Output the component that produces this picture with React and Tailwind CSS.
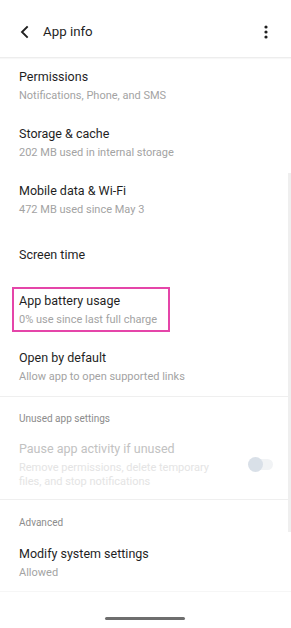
import React from "react";

function Row({ title, sub }) {
  return (
    <div className="px-[19px] pt-[10px] pb-[9px]">
      <div className="text-[12.5px] leading-[18px] text-[#1f1f1f]">{title}</div>
      <div className="text-[11px] leading-[20px] text-[#a3a3a3]">{sub}</div>
    </div>
  );
}

export default function App() {
  return (
    <div
      className="relative w-[291px] h-[628px] bg-white overflow-hidden"
      style={{ fontFamily: "Roboto, 'Noto Sans', sans-serif" }}
    >
      {/* Header */}
      <div className="h-[58px] pt-[7px] flex items-center border-b border-[#ededed] shadow-[0_1px_1px_rgba(0,0,0,0.03)]">
        <div className="w-[43px] flex justify-center pl-[6px]">
          <svg width="14" height="14" viewBox="0 0 14 14">
            <path d="M9 2 L4 7 L9 12" fill="none" stroke="#202020" strokeWidth="1.9" strokeLinecap="square" />
          </svg>
        </div>
        <div className="flex-1 text-[13.3px] text-[#1f1f1f]">App info</div>
        <div className="w-[50px] flex justify-center pr-[1px]">
          <svg width="4" height="14" viewBox="0 0 4 14">
            <circle cx="2" cy="2" r="1.6" fill="#202020" />
            <circle cx="2" cy="7" r="1.6" fill="#202020" />
            <circle cx="2" cy="12" r="1.6" fill="#202020" />
          </svg>
        </div>
      </div>

      <Row title="Permissions" sub="Notifications, Phone, and SMS" />
      <Row title="Storage & cache" sub="202 MB used in internal storage" />
      <Row title="Mobile data & Wi‑Fi" sub="472 MB used since May 3" />
      <div className="h-[53px] flex items-center px-[19px] text-[12.5px] text-[#1f1f1f]">Screen time</div>
      <div className="relative">
        <Row title="App battery usage" sub="0% use since last full charge" />
        <div className="absolute left-[12px] top-[5px] w-[158px] h-[45px] border-2 border-[#e545a9]" />
      </div>
      <Row title="Open by default" sub="Allow app to open supported links" />

      <div className="border-t border-[#efefef]" />
      <div className="px-[19px] pt-[14px] text-[10px] leading-[16px] text-[#8c8c8c]">Unused app settings</div>
      <div className="flex items-center pl-[19px] pr-[17px] pt-[13px] pb-[11px]">
        <div className="flex-1">
          <div className="text-[12.5px] leading-[18px] text-[#c2c2c2]">Pause app activity if unused</div>
          <div className="mt-[3px] text-[11px] leading-[13.5px] text-[#e4e4e4] w-[200px]">
            Remove permissions, delete temporary files, and stop notifications
          </div>
        </div>
        <div className="relative w-[26px] h-[16px] flex items-center">
          <div className="w-[24px] h-[11px] ml-[1px] rounded-full bg-[#f1f3f5]" />
          <div className="absolute left-0 top-[0.5px] w-[15px] h-[15px] rounded-full bg-[#d9e0e8]" />
        </div>
      </div>

      <div className="border-t border-[#efefef]" />
      <div className="px-[19px] pt-[15px] text-[10px] leading-[16px] text-[#8c8c8c]">Advanced</div>
      <div className="px-[19px] pt-[14px] pb-[8px]">
        <div className="text-[12.5px] leading-[18px] text-[#1f1f1f]">Modify system settings</div>
        <div className="text-[11px] leading-[20px] text-[#a3a3a3]">Allowed</div>
      </div>
      <div className="border-t border-[#f6f6f6]" />

      {/* scrollbar */}
      <div className="absolute right-0 top-[173px] w-[3px] h-[359px] bg-[#efefef]" />

      {/* nav handle */}
      <div className="absolute left-[105px] top-[617px] w-[80px] h-[3px] rounded-full bg-[#6e6e6e]" />
    </div>
  );
}
